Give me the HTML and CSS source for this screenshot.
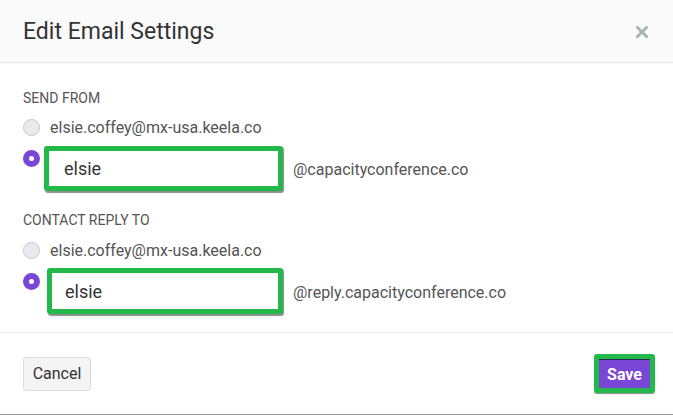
FILE: index.html
```html
<!DOCTYPE html>
<html>
<head>
<meta charset="utf-8">
<link rel="stylesheet" href="styles.css">
</head>
<body>
<div class="modal">
  <div class="header">
    <h1 class="title">Edit Email Settings</h1>
    <svg class="close" width="12" height="12" viewBox="0 0 12 12"><path d="M1.5 1.5 L10.5 10.5 M10.5 1.5 L1.5 10.5" stroke="#a9b1b9" stroke-width="3" stroke-linecap="round"/></svg>
  </div>
  <div class="body">
    <div class="label">Send From</div>
    <div class="row">
      <span class="radio"></span>
      <span class="email">elsie.coffey@mx-usa.keela.co</span>
    </div>
    <div class="row row-input">
      <span class="radio checked"></span>
      <div class="input first">elsie</div>
      <span class="suffix">@capacityconference.co</span>
    </div>

    <div class="label label-2">Contact Reply To</div>
    <div class="row row-2">
      <span class="radio"></span>
      <span class="email">elsie.coffey@mx-usa.keela.co</span>
    </div>
    <div class="row row-input">
      <span class="radio checked"></span>
      <div class="input second">elsie</div>
      <span class="suffix">@reply.capacityconference.co</span>
    </div>
  </div>
  <div class="footer">
    <button class="btn-cancel">Cancel</button>
    <div class="save-wrap"><button class="btn-save">Save</button></div>
  </div>
</div>
</body>
</html>
```
FILE: styles.css
```css
* { box-sizing: border-box; }
html, body { margin: 0; padding: 0; background: #fff; }
body { font-family: Roboto, "Liberation Sans", Arial, sans-serif; width: 673px; height: 415px; overflow: hidden; }

.modal { width: 673px; height: 415px; border-bottom: 1px solid #9a9a9a; background: #fff; display: flex; flex-direction: column; }

.header { height: 63px; background: #fafafa; border-bottom: 1px solid #e6e6e6; display: flex; align-items: center; justify-content: space-between; padding: 0 25px 0 23px; flex: none; }
.title { margin: 0; font-size: 23px; font-weight: 400; color: #333; letter-spacing: 0; }
.close { display: block; margin-top: 1px; }

.body { padding: 27px 23px 0; height: 270px; flex: none; border-bottom: 1px solid #e6e6e6; }
.label { font-size: 14px; line-height: 16px; height: 16px; color: #555; text-transform: uppercase; }
.label-2 { margin-top: 21px; }

.row { display: flex; align-items: center; height: 24px; margin-top: 9px; }
.row-2 { margin-top: 10px; }
.row-input { align-items: center; height: 46px; margin-top: 6px; }
.row-input .radio { align-self: flex-start; margin-top: 5px; }

.radio { width: 17px; height: 17px; border-radius: 50%; background: #e9e9ef; border: 1px solid #c6c6ce; flex: none; }
.radio.checked { background: #fff; border: 6px solid #7a46d6; }

.email { margin-left: 10px; font-size: 16px; color: #555; }

.input { height: 45px; border: 5px solid #22b94a; border-radius: 3px; box-shadow: 1px 1.5px 1px #8d8d8d; background: #fff; font-size: 18px; color: #333; display: flex; align-items: center; padding-left: 15px; flex: none; }
.input.first { width: 239px; margin-left: 4px; }
.input.second { width: 236px; margin-left: 7px; height: 46px; padding-left: 13px; }

.suffix { margin-left: 10px; font-size: 16px; color: #555; margin-top: 2px; }

.footer { flex: 1; display: flex; align-items: center; justify-content: space-between; padding: 0 18px 0 23px; }
.btn-cancel { font-family: inherit; width: 68px; height: 34px; background: #f4f4f4; border: 1px solid #dcdcdc; border-radius: 3px; font-size: 16px; color: #333; padding: 0; }
.save-wrap { width: 61px; height: 39px; border: 5px solid #22b94a; border-radius: 3px; box-shadow: 0 1px 1px #888; display: flex; }
.btn-save { font-family: inherit; flex: 1; margin: 0; background: #7a46d6; border: 0; border-top: 1px solid #2e2452; color: #fff; font-weight: 700; font-size: 16px; padding: 0; }
```
